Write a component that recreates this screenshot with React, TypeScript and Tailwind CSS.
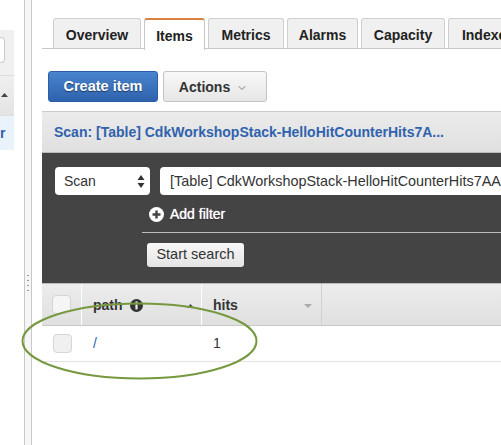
import { ChevronDown } from "lucide-react"

const font = "font-['Liberation_Sans',Arial,sans-serif]"

const tabs = [
  { label: "Overview", w: "w-[88px]" },
  { label: "Items", w: "w-[61px]", active: true },
  { label: "Metrics", w: "w-[76px]" },
  { label: "Alarms", w: "w-[71px]" },
  { label: "Capacity", w: "w-[84px]" },
  { label: "Indexes", w: "w-[80px]" },
]

function Tabs() {
  return (
    <div className="flex h-[49px] gap-[3px] border-b border-[#c8c8c8] pt-[18px] pl-[11px]">
      {tabs.map((t) =>
        t.active ? (
          <div
            key={t.label}
            className={`${t.w} relative z-10 h-[32px] shrink-0 rounded-t-[3px] border border-t-2 border-b-0 border-[#c8c8c8] border-t-[#d9823f] bg-white pt-[6px] text-center text-[14px] leading-[20px] font-bold text-[#222]`}
          >
            {t.label}
          </div>
        ) : (
          <div
            key={t.label}
            className={`${t.w} h-[30px] shrink-0 rounded-t-[3px] border border-b-0 border-[#cfcfcf] bg-[#f0f0f0] pt-[6px] text-center text-[14px] leading-[20px] font-bold text-[#222]`}
          >
            {t.label}
          </div>
        ),
      )}
    </div>
  )
}

function Toolbar() {
  return (
    <div className="flex gap-[5px] pt-[22px] pl-[6px]">
      <button className="h-[31px] w-[110px] rounded-[3px] border border-[#2a5ea8] bg-gradient-to-b from-[#4a84ce] to-[#2f62ad] pt-[1px] text-[14.5px] font-bold text-white [text-shadow:0_1px_1px_rgba(0,0,0,0.5)]">
        Create item
      </button>
      <button className="flex h-[31px] w-[104px] items-center justify-center gap-[6px] rounded-[3px] border border-[#c4c4c4] bg-gradient-to-b from-[#f8f8f8] to-[#e6e6e6] pt-[1px] pr-[3px] text-[14px] font-bold text-[#333]">
        Actions
        <ChevronDown className="mt-[2px] h-[12px] w-[12px] text-[#555]" strokeWidth={1.5} />
      </button>
    </div>
  )
}

function ScanPanel() {
  return (
    <div className="h-[132px] border-t border-b border-[#bbb] bg-[#444]">
      <div className="flex gap-[10px] pt-[14px] pl-[13px]">
        <div className="flex h-[28px] w-[95px] shrink-0 items-center justify-between rounded-[4px] bg-white pr-[5px] pl-[9px] text-[14px] text-[#333]">
          Scan
          <svg width="8" height="13" viewBox="0 0 8 13" fill="#333">
            <path d="M4 0 L7.5 5 H0.5 Z M4 13 L0.5 8 H7.5 Z" />
          </svg>
        </div>
        <div className="h-[28px] flex-1 overflow-hidden rounded-l-[4px] bg-white pl-[10px] text-[14.4px] leading-[28px] whitespace-nowrap text-[#333]">
          [Table] CdkWorkshopStack-HelloHitCounterHits7AAEBF80
        </div>
      </div>
      <div className="flex items-center gap-[6px] pt-[9px] pl-[107px]">
        <svg width="15" height="15" viewBox="0 0 15 15" className="mt-[1px]">
          <circle cx="7.5" cy="7.5" r="7.5" fill="#fff" />
          <path d="M7.5 3.5 V11.5 M3.5 7.5 H11.5" stroke="#444" strokeWidth="2.4" />
        </svg>
        <span className="text-[14px] leading-[20px] text-white [text-shadow:0_0_1px_#fff,0_1px_1px_rgba(0,0,0,0.6)]">Add filter</span>
      </div>
      <div className="mt-[8px] ml-[100px] border-t border-[#bdbdbd] pt-[9px] pl-[5px]">
        <button className="h-[24px] w-[97px] rounded-[3px] bg-gradient-to-b from-[#f8f8f8] to-[#e4e4e4] text-[14.5px] text-[#333]">
          Start search
        </button>
      </div>
    </div>
  )
}

function Checkbox() {
  return <div className="h-[19px] w-[19px] rounded-[4px] border border-[#d5d5d5] bg-[#f0f0f0]" />
}

function ResultsTable() {
  return (
    <div>
      <div className="flex h-[42px] border-b border-[#c8c8c8] bg-gradient-to-b from-[#ececec] to-[#e0e0e0] text-[14px] font-bold text-[#333]">
        <div className="flex w-[40px] items-center justify-center border-r border-white">
          <div className="h-[19px] w-[19px] rounded-[4px] border border-[#d5d5d5] bg-[#f5f5f5]" />
        </div>
        <div className="flex w-[120px] items-center justify-between border-r border-white pt-[2px] pr-[7px] pl-[11px]">
          <span className="flex items-center gap-[7px]">
            path
            <svg width="13" height="13" viewBox="0 0 13 13">
              <circle cx="6.5" cy="6.5" r="6.5" fill="#333" />
              <rect x="5.4" y="5.4" width="2.2" height="5" fill="#eee" />
              <rect x="5.4" y="2.4" width="2.2" height="2" fill="#eee" />
            </svg>
          </span>
          <svg width="7" height="4" viewBox="0 0 7 4" fill="#444">
            <path d="M3.5 0 L7 4 H0 Z" />
          </svg>
        </div>
        <div className="flex w-[120px] items-center justify-between border-r border-[#d0d0d0] pt-[2px] pr-[9px] pl-[11px]">
          hits
          <svg width="8" height="4" viewBox="0 0 8 4" fill="#aaa">
            <path d="M0 0 H8 L4 4 Z" />
          </svg>
        </div>
        <div className="flex-1" />
      </div>
      <div className="flex h-[36px] items-center border-b border-[#e2e2e2] text-[14px] text-[#333]">
        <div className="flex w-[40px] justify-center">
          <Checkbox />
        </div>
        <div className="w-[120px] pl-[11px] text-[#2f62ad]">/</div>
        <div className="pl-[11px]">1</div>
      </div>
    </div>
  )
}

export default function App() {
  return (
    <div className={`${font} relative flex h-[445px] w-[501px] overflow-hidden bg-white`}>
      {/* resource list, cut off at the left */}
      <div className="w-[14px] shrink-0 pt-[30px]">
        <div className="h-[45px] bg-[#f0f0f0] pt-[7px]">
          <div className="h-[26px] w-[5px] rounded-r-[4px] border border-l-0 border-[#ccc] bg-white" />
        </div>
        <div className="flex h-[41px] items-center border-y border-[#ddd] bg-gradient-to-b from-[#efefef] to-[#e4e4e4] pl-[1px]">
          <svg width="7" height="4" viewBox="0 0 7 4" fill="#444" className="mt-[-2px]">
            <path d="M3.5 0 L7 4 H0 Z" />
          </svg>
        </div>
        <div className="flex h-[34px] justify-start overflow-hidden bg-[#eaf3fc] text-[14px] leading-[34px] font-bold text-[#2f62ad]">
          r
        </div>
      </div>
      {/* drag divider */}
      <div className="ml-[10px] flex h-full w-[8px] shrink-0 flex-col items-center border-x border-[#c8c8c8] bg-[#f6f6f6] pt-[275px]">
        <div className="h-[18px] w-[2px] bg-[repeating-linear-gradient(#999_0_1px,transparent_1px_5px)]" />
      </div>
      <div className="ml-[10px] min-w-0 flex-1">
        <Tabs />
        <Toolbar />
        <div className="mt-[9px] h-[41px] truncate border-t border-[#ccc] bg-gradient-to-b from-[#ebebeb] to-[#e0e0e0] pl-[12px] text-[14px] leading-[41px] font-bold text-[#2f62ad]">
          Scan: [Table] CdkWorkshopStack-HelloHitCounterHits7A...
        </div>
        <ScanPanel />
        <ResultsTable />
      </div>
      {/* hand-drawn annotation over the row */}
      <svg className="pointer-events-none absolute top-[300px] left-[20px]" width="240" height="82" viewBox="0 0 240 82" fill="none">
        <ellipse cx="119.5" cy="41" rx="117" ry="37.5" stroke="#76983f" strokeWidth="2" />
      </svg>
    </div>
  )
}
